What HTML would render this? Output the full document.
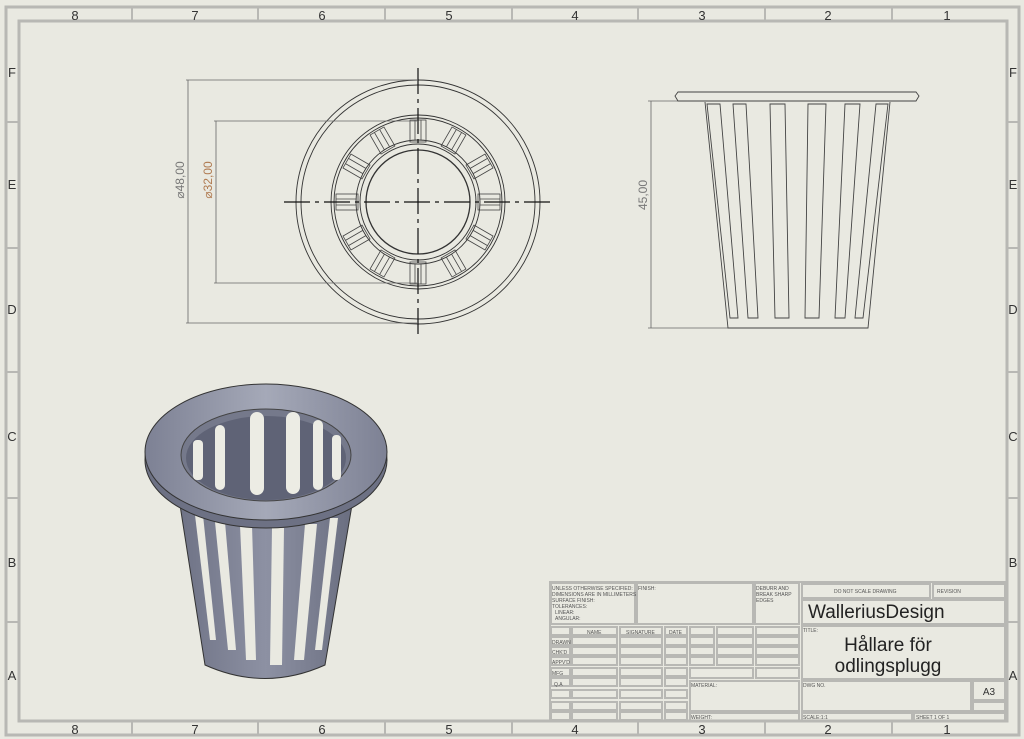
<!DOCTYPE html>
<html><head><meta charset="utf-8"><style>
html,body{margin:0;padding:0;background:#e9e9e1;}
svg{display:block}
text{font-family:"Liberation Sans",sans-serif;}
</style></head><body>
<svg width="1024" height="739" viewBox="0 0 1024 739" xmlns="http://www.w3.org/2000/svg">
<rect width="1024" height="739" fill="#e9e9e1"/>
<!-- frames -->
<rect x="6" y="7" width="1013" height="728" fill="none" stroke="#b8b8b4" stroke-width="3"/>
<rect x="19" y="21" width="988" height="700" fill="none" stroke="#b8b8b4" stroke-width="3"/>
<g stroke="#b8b8b4" stroke-width="2">
<line x1="132" y1="7" x2="132" y2="21"/><line x1="258" y1="7" x2="258" y2="21"/><line x1="385" y1="7" x2="385" y2="21"/><line x1="512" y1="7" x2="512" y2="21"/><line x1="638" y1="7" x2="638" y2="21"/><line x1="765" y1="7" x2="765" y2="21"/><line x1="892" y1="7" x2="892" y2="21"/>
<line x1="132" y1="721" x2="132" y2="735"/><line x1="258" y1="721" x2="258" y2="735"/><line x1="385" y1="721" x2="385" y2="735"/><line x1="512" y1="721" x2="512" y2="735"/><line x1="638" y1="721" x2="638" y2="735"/><line x1="765" y1="721" x2="765" y2="735"/><line x1="892" y1="721" x2="892" y2="735"/>
<line x1="6" y1="122" x2="19" y2="122"/><line x1="6" y1="248" x2="19" y2="248"/><line x1="6" y1="372" x2="19" y2="372"/><line x1="6" y1="498" x2="19" y2="498"/><line x1="6" y1="622" x2="19" y2="622"/>
<line x1="1007" y1="122" x2="1019" y2="122"/><line x1="1007" y1="248" x2="1019" y2="248"/><line x1="1007" y1="372" x2="1019" y2="372"/><line x1="1007" y1="498" x2="1019" y2="498"/><line x1="1007" y1="622" x2="1019" y2="622"/>
</g>
<g font-size="13" fill="#333" text-anchor="middle">
<text x="75" y="20">8</text><text x="195" y="20">7</text><text x="322" y="20">6</text><text x="449" y="20">5</text><text x="575" y="20">4</text><text x="702" y="20">3</text><text x="828" y="20">2</text><text x="947" y="20">1</text>
<text x="75" y="734">8</text><text x="195" y="734">7</text><text x="322" y="734">6</text><text x="449" y="734">5</text><text x="575" y="734">4</text><text x="702" y="734">3</text><text x="828" y="734">2</text><text x="947" y="734">1</text>
<text x="12" y="77">F</text><text x="12" y="189">E</text><text x="12" y="314">D</text><text x="12" y="441">C</text><text x="12" y="567">B</text><text x="12" y="680">A</text>
<text x="1013" y="77">F</text><text x="1013" y="189">E</text><text x="1013" y="314">D</text><text x="1013" y="441">C</text><text x="1013" y="567">B</text><text x="1013" y="680">A</text>
</g>
<!-- top view -->
<g fill="none" stroke="#333" stroke-width="0.9">
<circle cx="418" cy="202" r="122"/><circle cx="418" cy="202" r="117"/>
<circle cx="418" cy="202" r="87"/><circle cx="418" cy="202" r="84"/><circle cx="418" cy="202" r="62"/><circle cx="418" cy="202" r="58"/><circle cx="418" cy="202" r="52" stroke-width="1.3"/>
</g>
<g stroke="#444" stroke-width="0.8" fill="none" transform="translate(418 202)">
<g id="seg"><rect x="-8" y="-82" width="16" height="22"/><line x1="-3" y1="-82" x2="-3" y2="-62"/><line x1="3" y1="-82" x2="3" y2="-62"/></g>
<use href="#seg" transform="rotate(30)"/><use href="#seg" transform="rotate(60)"/><use href="#seg" transform="rotate(90)"/><use href="#seg" transform="rotate(120)"/><use href="#seg" transform="rotate(150)"/><use href="#seg" transform="rotate(180)"/><use href="#seg" transform="rotate(210)"/><use href="#seg" transform="rotate(240)"/><use href="#seg" transform="rotate(270)"/><use href="#seg" transform="rotate(300)"/><use href="#seg" transform="rotate(330)"/>
</g>
<g stroke="#111" stroke-width="1.2" stroke-dasharray="26,5,4,5">
<line x1="284" y1="202" x2="553" y2="202"/><line x1="418" y1="68" x2="418" y2="336"/>
</g>
<g stroke="#666" stroke-width="0.8">
<line x1="186" y1="80" x2="418" y2="80"/><line x1="186" y1="323" x2="418" y2="323"/><line x1="188" y1="80" x2="188" y2="323"/>
<line x1="214" y1="121" x2="418" y2="121"/><line x1="214" y1="283" x2="418" y2="283"/><line x1="216" y1="121" x2="216" y2="283"/>
<line x1="648" y1="101" x2="705" y2="101"/><line x1="648" y1="328" x2="728" y2="328"/><line x1="651" y1="101" x2="651" y2="328"/>
</g>
<text transform="translate(184 180) rotate(-90)" font-size="12" fill="#777" text-anchor="middle">⌀48,00</text>
<text transform="translate(212 180) rotate(-90)" font-size="12" fill="#b07a50" text-anchor="middle">⌀32,00</text>
<text transform="translate(647 195) rotate(-90)" font-size="12" fill="#777" text-anchor="middle">45,00</text>
<!-- side view -->
<g fill="none" stroke="#444" stroke-width="0.9">
<path d="M678 92 L916 92 L919 96 L916 101 L678 101 L675 96 Z"/>
<path d="M705 102 L728 328 L868 328 L890 102"/>
<path d="M707 104 L730 318 L738 318 L720 104 Z"/>
<path d="M733 104 L748 318 L758 318 L746 104 Z"/>
<path d="M770 104 L775 318 L789 318 L785 104 Z"/>
<path d="M808 104 L805 318 L819 318 L826 104 Z"/>
<path d="M845 104 L835 318 L845 318 L860 104 Z"/>
<path d="M876 104 L855 318 L863 318 L888 104 Z"/>
</g>
<!-- 3D basket -->
<defs>
<linearGradient id="bg" x1="0" x2="1"><stop offset="0" stop-color="#6f7386"/><stop offset="0.5" stop-color="#8d91a3"/><stop offset="1" stop-color="#6a6e80"/></linearGradient>
<linearGradient id="rg" x1="0" x2="1"><stop offset="0" stop-color="#7d8194"/><stop offset="0.5" stop-color="#a5a9b8"/><stop offset="1" stop-color="#7d8194"/></linearGradient>
</defs>
<path d="M180 505 L205 665 Q265 692 325 665 L352 505 Z" fill="url(#bg)" stroke="#333" stroke-width="1"/>
<g fill="#e9e9e1">
<path d="M195 515 L210 640 L216 640 L203 515Z"/><path d="M215 522 L228 650 L236 650 L225 522Z"/>
<path d="M240 525 L246 660 L256 660 L252 525Z"/><path d="M272 528 L270 665 L282 665 L284 528Z"/>
<path d="M305 524 L294 660 L304 660 L317 524Z"/><path d="M330 518 L315 650 L322 650 L338 518Z"/>
</g>
<ellipse cx="266" cy="460" rx="121" ry="68" fill="#6d7184" stroke="#333"/>
<ellipse cx="266" cy="452" rx="121" ry="68" fill="url(#rg)" stroke="#333"/>
<ellipse cx="266" cy="455" rx="85" ry="46" fill="#75798b" stroke="#444"/>
<ellipse cx="266" cy="458" rx="80" ry="42" fill="#5f6376"/>
<g fill="#ecece4">
<rect x="193" y="440" width="10" height="40" rx="4"/><rect x="215" y="425" width="10" height="65" rx="5"/>
<rect x="250" y="412" width="14" height="83" rx="7"/><rect x="286" y="412" width="14" height="82" rx="7"/>
<rect x="313" y="420" width="10" height="70" rx="5"/><rect x="332" y="435" width="9" height="45" rx="4"/>
</g>
<!-- title block -->
<g fill="none" stroke="#b8b8b4" stroke-width="2">
<rect x="550" y="582" width="456" height="139"/>
<rect x="551" y="583" width="84" height="41"/><rect x="637" y="583" width="116" height="41"/><rect x="755" y="583" width="44" height="41"/>
<rect x="802" y="584" width="128" height="14"/><rect x="933" y="584" width="72" height="14"/>
<rect x="802" y="600" width="203" height="24"/><rect x="802" y="626" width="203" height="53"/>
<rect x="802" y="681" width="169" height="30"/><rect x="973" y="681" width="32" height="19"/><rect x="973" y="702" width="32" height="9"/>
<rect x="802" y="713" width="110" height="8"/><rect x="914" y="713" width="91" height="8"/>
<rect x="690" y="681" width="109" height="30"/><rect x="690" y="713" width="109" height="8"/>
</g>
<g fill="none" stroke="#b8b8b4" stroke-width="2">
<g id="row">
<rect x="551" y="627" width="19" height="8"/><rect x="572" y="627" width="45" height="8"/><rect x="620" y="627" width="42" height="8"/><rect x="665" y="627" width="22" height="8"/>
</g>
<use href="#row" y="10"/><use href="#row" y="20"/><use href="#row" y="30"/><use href="#row" y="41"/><use href="#row" y="51"/><use href="#row" y="63"/><use href="#row" y="75"/><use href="#row" y="85"/>
<rect x="690" y="627" width="24" height="8"/><rect x="717" y="627" width="36" height="8"/><rect x="756" y="627" width="43" height="8"/>
<rect x="690" y="637" width="24" height="8"/><rect x="717" y="637" width="36" height="8"/><rect x="756" y="637" width="43" height="8"/>
<rect x="690" y="647" width="24" height="8"/><rect x="717" y="647" width="36" height="8"/><rect x="756" y="647" width="43" height="8"/>
<rect x="690" y="657" width="24" height="8"/><rect x="717" y="657" width="36" height="8"/><rect x="756" y="657" width="43" height="8"/>
<rect x="690" y="668" width="63" height="10"/><rect x="756" y="668" width="43" height="10"/>
</g>
<g font-size="5" fill="#555">
<text x="552" y="590">UNLESS OTHERWISE SPECIFIED:</text><text x="552" y="596">DIMENSIONS ARE IN MILLIMETERS</text><text x="552" y="602">SURFACE FINISH:</text><text x="552" y="608">TOLERANCES:</text><text x="555" y="614">LINEAR:</text><text x="555" y="620">ANGULAR:</text>
<text x="638" y="590">FINISH:</text><text x="756" y="590">DEBURR AND</text><text x="756" y="596">BREAK SHARP</text><text x="756" y="602">EDGES</text>
<text x="834" y="593">DO NOT SCALE DRAWING</text><text x="937" y="593">REVISION</text>
<text x="587" y="634">NAME</text><text x="626" y="634">SIGNATURE</text><text x="669" y="634">DATE</text>
<text x="552" y="644">DRAWN</text><text x="552" y="654">CHK'D</text><text x="552" y="664">APPV'D</text><text x="552" y="675">MFG</text><text x="554" y="686">Q.A</text>
<text x="691" y="687">MATERIAL:</text><text x="691" y="719">WEIGHT:</text><text x="803" y="632">TITLE:</text><text x="803" y="687">DWG NO.</text>
<text x="803" y="719">SCALE:1:1</text><text x="916" y="719">SHEET 1 OF 1</text>
</g>
<text x="808" y="618" font-size="19" fill="#222">WalleriusDesign</text>
<text x="888" y="651" font-size="19" fill="#222" text-anchor="middle">Hållare för</text>
<text x="888" y="672" font-size="19" fill="#222" text-anchor="middle">odlingsplugg</text>
<text x="989" y="695" font-size="10" fill="#333" text-anchor="middle">A3</text>
</svg>
</body></html>
